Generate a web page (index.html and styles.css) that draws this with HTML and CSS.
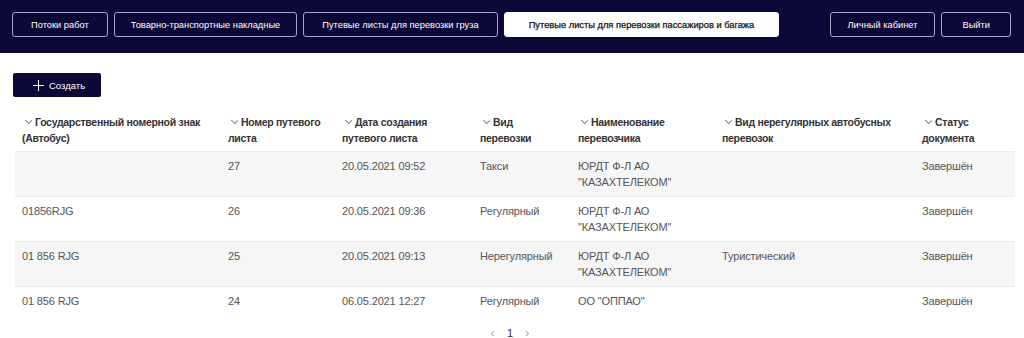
FILE: index.html
```html
<!DOCTYPE html>
<html lang="ru">
<head>
<meta charset="utf-8">
<link rel="stylesheet" href="styles.css">
</head>
<body>
<header class="nav">
  <div class="nav-left">
    <a class="nav-btn">Потоки работ</a>
    <a class="nav-btn tight">Товарно-транспортные накладные</a>
    <a class="nav-btn">Путевые листы для перевозки груза</a>
    <a class="nav-btn active">Путевые листы для перевозки пассажиров и багажа</a>
  </div>
  <div class="nav-right">
    <a class="nav-btn narrow">Личный кабинет</a>
    <a class="nav-btn exit">Выйти</a>
  </div>
</header>
<main class="content">
  <button class="create-btn"><svg class="plus" width="11" height="11" viewBox="0 0 11 11"><path d="M5.5 0V11M0 5.5H11" stroke="#fff" stroke-width="1"/></svg><span>Создать</span></button>
  <table class="grid">
    <colgroup>
      <col style="width:206px"><col style="width:114px"><col style="width:138px"><col style="width:98px"><col style="width:144px"><col style="width:200px"><col style="width:100px">
    </colgroup>
    <thead>
      <tr>
        <th><span class="chev"></span>Государственный номерной знак (Автобус)</th>
        <th><span class="chev"></span>Номер путевого листа</th>
        <th><span class="chev"></span>Дата создания путевого листа</th>
        <th><span class="chev"></span>Вид перевозки</th>
        <th><span class="chev"></span>Наименование перевозчика</th>
        <th><span class="chev"></span>Вид нерегулярных автобусных перевозок</th>
        <th><span class="chev"></span>Статус документа</th>
      </tr>
    </thead>
    <tbody>
      <tr class="odd">
        <td></td><td>27</td><td>20.05.2021 09:52</td><td>Такси</td><td>ЮРДТ Ф-Л АО<br>"КАЗАХТЕЛЕКОМ"</td><td></td><td>Завершён</td>
      </tr>
      <tr>
        <td>01856RJG</td><td>26</td><td>20.05.2021 09:36</td><td>Регулярный</td><td>ЮРДТ Ф-Л АО<br>"КАЗАХТЕЛЕКОМ"</td><td></td><td>Завершён</td>
      </tr>
      <tr class="odd">
        <td>01 856 RJG</td><td>25</td><td>20.05.2021 09:13</td><td>Нерегулярный</td><td>ЮРДТ Ф-Л АО<br>"КАЗАХТЕЛЕКОМ"</td><td>Туристический</td><td>Завершён</td>
      </tr>
      <tr class="last">
        <td>01 856 RJG</td><td>24</td><td>06.05.2021 12:27</td><td>Регулярный</td><td>ОО "ОППАО"</td><td></td><td>Завершён</td>
      </tr>
    </tbody>
  </table>
  <nav class="pager">
    <span class="pg-arrow">&lsaquo;</span>
    <span class="pg-num">1</span>
    <span class="pg-arrow">&rsaquo;</span>
  </nav>
</main>
</body>
</html>
```

FILE: styles.css
```css
* { box-sizing: border-box; }
html, body { margin: 0; padding: 0; background: #fff; }
body { font-family: "Liberation Sans", Arial, sans-serif; color: #555; overflow: hidden; }

.nav {
  height: 53px;
  background: #0c0838;
  display: flex;
  justify-content: space-between;
  align-items: flex-start;
  padding: 12px 13px 0 12px;
}
.nav-left, .nav-right { display: flex; gap: 6px; }
.nav-btn {
  display: flex;
  align-items: center;
  height: 25px;
  padding: 0 18px;
  border: 1px solid #a8a5c6;
  border-radius: 3px;
  color: #fff;
  font-size: 9.3px;
  white-space: nowrap;
}
.nav-btn.tight { padding: 0 16px; }
.nav-btn.narrow { padding: 0 17px; }
.nav-btn.exit { padding: 0 20px; }
.nav-btn.active {
  background: #fff;
  color: #111;
  border-color: #fff;
  padding: 0 24px;
  -webkit-text-stroke: 0.25px #111;
}

.content { padding: 20px 9px 0 13px; }
.create-btn {
  display: flex;
  align-items: center;
  gap: 5px;
  width: 88px;
  height: 24px;
  padding: 0 0 0 20px;
  border: 0;
  border-radius: 2px;
  background: #0c0838;
  color: #fff;
  font-family: "Liberation Sans", Arial, sans-serif;
  font-size: 9.5px;
}
.plus { display: block; }

.grid {
  margin: 9px 0 0 2px;
  width: 1000px;
  table-layout: fixed;
  border-collapse: collapse;
  font-size: 11px;
  line-height: 16px;
}
.grid th {
  text-align: left;
  vertical-align: top;
  font-weight: bold;
  font-size: 10.5px;
  letter-spacing: -0.3px;
  color: #333;
  padding: 8px 6px 5px 7px;
  border-bottom: 1px solid #ececec;
}
.chev {
  display: inline-block;
  width: 5px;
  height: 5px;
  margin: 0 4px 0 4px;
  border-right: 1px solid #888;
  border-bottom: 1px solid #888;
  transform: translateY(-3px) rotate(45deg) scaleX(1.1);
}
.grid td {
  vertical-align: top;
  padding: 6px 8px 6px 7px;
  height: 43px;
  letter-spacing: -0.15px;
  border-bottom: 1px solid #ececec;
}
.grid tr.odd td { background: #f6f6f6; }
.grid tr.last td { border-bottom: 0; height: 28px; }

.pager {
  display: flex;
  justify-content: center;
  align-items: center;
  gap: 12px;
  margin-top: 10px;
  padding-right: 8px;
  line-height: 16px;
  font-size: 11px;
  color: #333;
}
.pg-arrow { color: #aaa; font-size: 13px; line-height: 16px; }
```
